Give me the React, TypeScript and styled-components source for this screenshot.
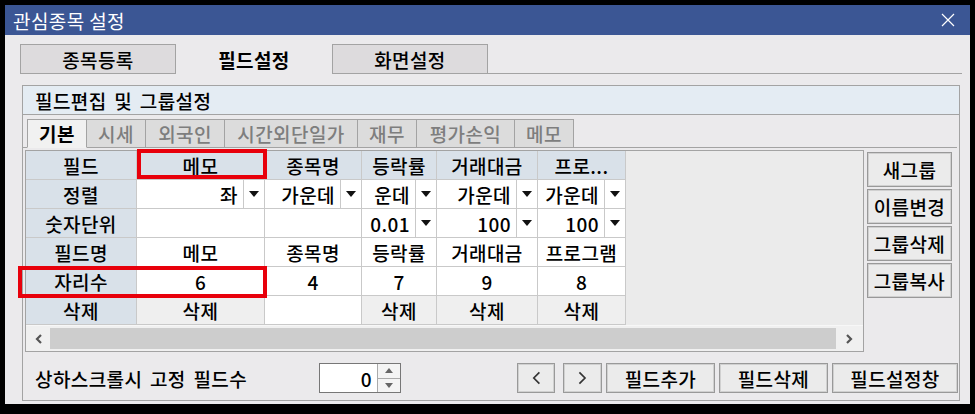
import React from 'react';
import styled, { createGlobalStyle, css } from 'styled-components';

const GlobalStyle = createGlobalStyle`
    html, body {
        margin: 0;
        padding: 0;
        background: #000;
    }
    body {
        font-family: "Noto Sans CJK KR", "Noto Sans", sans-serif;
        font-size: 19px;
        font-weight: 500;
        letter-spacing: 0.4px;
        color: #000;
    }
    * {
        box-sizing: border-box;
    }
`;

const LINE = '#a3a3a3';
const CELL_LINE = '#c9c9c9';
const HEAD_BG = '#d9e1e9';

const Screen = styled.div`
    width: 975px;
    height: 414px;
    padding: 5px 5px 10px 5px;
    background: #000;
`;

const Dialog = styled.div`
    width: 100%;
    height: 100%;
    display: flex;
    flex-direction: column;
    background: #ebeaec;
`;

const TitleBar = styled.div`
    height: 30px;
    flex: 0 0 30px;
    display: flex;
    align-items: center;
    justify-content: space-between;
    padding: 0 15px 0 8px;
    background: #3b5694;
    color: #fff;
    font-weight: 400;
`;

const Body = styled.div`
    flex: 1;
    display: flex;
    flex-direction: column;
    padding: 9px 8px 4px 15px;
`;

const MainTabs = styled.div`
    display: flex;
    height: 30px;
`;

const MainTab = styled.div<{ $active?: boolean }>`
    width: 156px;
    display: flex;
    align-items: center;
    justify-content: center;
    ${({ $active }) => $active
        ? css`
            font-weight: 700;
            background: #ebeaec;
        `
        : css`
            background: #dddbdd;
            border: 1px solid ${LINE};
        `}
`;

const TabFiller = styled.div`
    flex: 1;
    border-bottom: 1px solid ${LINE};
`;

const GroupBox = styled.section`
    margin: 11px 2px 0 2px;
    height: 316px;
    display: flex;
    flex-direction: column;
    border: 1px solid ${LINE};
`;

const GroupHeader = styled.div`
    height: 29px;
    display: flex;
    align-items: center;
    padding-left: 12px;
    word-spacing: 3px;
    background: #e4ecf3;
    border-bottom: 1px solid ${LINE};
`;

const SubTabs = styled.div`
    display: flex;
    height: 31px;
    margin: 2px 2px 0 0;
    padding: 2px 0 0 4px;
    border-bottom: 1px solid ${LINE};
`;

const SubTab = styled.div<{ $w: number; $active?: boolean }>`
    width: ${({ $w }) => $w}px;
    height: 29px;
    display: flex;
    align-items: center;
    justify-content: center;
    border: 1px solid ${LINE};
    border-left: none;
    ${({ $active }) => $active
        ? css`
            border-left: 1px solid ${LINE};
            border-bottom: 1px solid #f1f1f1;
            background: #f1f1f1;
            font-weight: 700;
        `
        : css`
            background: #dcdcdc;
            color: #7e7e7e;
        `}
`;

const ContentRow = styled.div`
    display: flex;
    gap: 3px;
    margin: 2px 7px 0 2px;
`;

const GridFrame = styled.div`
    position: relative;
    width: 839px;
    height: 202px;
    display: flex;
    flex-direction: column;
    border: 1px solid ${LINE};
    background: #ebebeb;
`;

const Table = styled.div`
    display: grid;
    grid-template-columns: 111px 128px 97px 75px 101px 88px;
    grid-auto-rows: 29px;
    width: 600px;
    flex: 1;
`;

type CellTone = 'head' | 'plain' | 'button';

const toneBg: Record<CellTone, string> = {
    head: HEAD_BG,
    plain: '#fff',
    button: '#efefef',
};

const Cell = styled.div<{ $tone: CellTone }>`
    display: flex;
    align-items: center;
    justify-content: center;
    overflow: hidden;
    white-space: nowrap;
    border-right: 1px solid ${CELL_LINE};
    border-bottom: 1px solid ${CELL_LINE};
    background: ${({ $tone }) => toneBg[$tone]};
`;

const SelectCell = styled.div`
    display: flex;
    overflow: hidden;
    white-space: nowrap;
    border-right: 1px solid ${CELL_LINE};
    border-bottom: 1px solid ${CELL_LINE};
    background: #fff;
`;

const SelectValue = styled.span`
    flex: 1;
    display: flex;
    align-items: center;
    justify-content: flex-end;
    padding-right: 5px;
    overflow: hidden;
`;

const SelectArrow = styled.span`
    width: 21px;
    display: flex;
    align-items: center;
    justify-content: center;
    border-left: 1px solid ${CELL_LINE};

    &::after {
        content: '';
        border-left: 5px solid transparent;
        border-right: 5px solid transparent;
        border-top: 6px solid #111;
    }
`;

const ScrollBar = styled.div`
    height: 26px;
    display: flex;
    align-items: stretch;
    background: #f0f0f0;
    border-top: 1px solid #f7f7f7;
`;

const ScrollButton = styled.div<{ $w: number }>`
    width: ${({ $w }) => $w}px;
    display: flex;
    align-items: center;
    justify-content: center;
`;

const ScrollThumb = styled.div`
    flex: 1;
    margin: 2px 0;
    background: #cdcdcd;
`;

const Marker = styled.div<{ $x: number; $y: number; $w: number; $h: number }>`
    position: absolute;
    left: ${({ $x }) => $x}px;
    top: ${({ $y }) => $y}px;
    width: ${({ $w }) => $w}px;
    height: ${({ $h }) => $h}px;
    border: 4px solid #e8000b;
    pointer-events: none;
`;

const SideButtons = styled.div`
    display: flex;
    flex-direction: column;
    gap: 2px;
    margin-top: 2px;
`;

const PlainButton = styled.button<{ $w: number; $h?: number; $gapLeft?: number }>`
    width: ${({ $w }) => $w}px;
    height: ${({ $h }) => $h ?? 30}px;
    margin-left: ${({ $gapLeft }) => $gapLeft ?? 0}px;
    display: flex;
    align-items: center;
    justify-content: center;
    padding: 0;
    font: inherit;
    letter-spacing: inherit;
    white-space: nowrap;
    color: #000;
    background: #ebebeb;
    border: 1px solid #999;
    box-shadow: inset 0 0 0 1px #d0d0d0;
`;

const BottomRow = styled.div`
    display: flex;
    align-items: center;
    height: 30px;
    margin: auto 1px 7px 12px;
`;

const FixedLabel = styled.span`
    width: 284px;
    word-spacing: 3px;
`;

const Spin = styled.div`
    display: flex;
    width: 82px;
    height: 30px;
    border: 1px solid #777;
    background: #fff;
`;

const SpinValue = styled.span`
    flex: 1;
    display: flex;
    align-items: center;
    justify-content: flex-end;
    padding-right: 5px;
`;

const SpinArrows = styled.div`
    width: 23px;
    display: flex;
    flex-direction: column;
    border-left: 1px solid #aaa;
`;

const SpinStep = styled.span<{ $up?: boolean }>`
    flex: 1;
    display: flex;
    align-items: center;
    justify-content: center;
    background: #f4f4f4;
    & + & {
        border-top: 1px solid #aaa;
    }

    &::after {
        content: '';
        border-left: 4px solid transparent;
        border-right: 4px solid transparent;
        ${({ $up }) => $up
            ? css`border-bottom: 5px solid #666;`
            : css`border-top: 5px solid #666;`}
    }
`;

const Spacer = styled.div`
    flex: 1;
`;

const ActionButtons = styled.div`
    display: flex;
    gap: 4px;
`;

const Chevron = ({ dir, color = '#555', w = 2.2, size = 10 }: { dir: 'left' | 'right'; color?: string; w?: number; size?: number }) => (
    <svg width={size * 0.7} height={size} viewBox="0 0 7 10">
        <polyline
            points={dir === 'left' ? '6,1 2,5 6,9' : '1,1 5,5 1,9'}
            fill="none"
            stroke={color}
            strokeWidth={w}
        />
    </svg>
);

const CloseIcon = () => (
    <svg width="14" height="14" viewBox="0 0 14 14">
        <path d="M1 1 L13 13 M13 1 L1 13" stroke="#fff" strokeWidth="1.2" />
    </svg>
);

type GridCell =
    | { kind: 'head'; text: string }
    | { kind: 'text'; text: string }
    | { kind: 'select'; text: string }
    | { kind: 'button'; text: string }
    | { kind: 'empty' };

const head = (text: string): GridCell => ({ kind: 'head', text });
const text = (t: string): GridCell => ({ kind: 'text', text: t });
const select = (t: string): GridCell => ({ kind: 'select', text: t });
const del: GridCell = { kind: 'button', text: '삭제' };
const empty: GridCell = { kind: 'empty' };

const rows: GridCell[][] = [
    [head('필드'), head('메모'), head('종목명'), head('등락률'), head('거래대금'), head('프로...')],
    [head('정렬'), select('좌'), select('가운데'), select('운데'), select('가운데'), select('가운데')],
    [head('숫자단위'), empty, empty, select('0.01'), select('100'), select('100')],
    [head('필드명'), text('메모'), text('종목명'), text('등락률'), text('거래대금'), text('프로그램')],
    [head('자리수'), text('6'), text('4'), text('7'), text('9'), text('8')],
    [head('삭제'), del, empty, del, del, del],
];

const subTabs = [
    { label: '기본', w: 60 },
    { label: '시세', w: 59 },
    { label: '외국인', w: 79 },
    { label: '시간외단일가', w: 133 },
    { label: '재무', w: 59 },
    { label: '평가손익', w: 98 },
    { label: '메모', w: 59 },
];

const renderCell = (cell: GridCell, key: string) => {
    switch (cell.kind) {
        case 'head':
            return <Cell key={key} $tone="head">{cell.text}</Cell>;
        case 'button':
            return <Cell key={key} $tone="button">{cell.text}</Cell>;
        case 'select':
            return (
                <SelectCell key={key}>
                    <SelectValue>{cell.text}</SelectValue>
                    <SelectArrow />
                </SelectCell>
            );
        case 'text':
            return <Cell key={key} $tone="plain">{cell.text}</Cell>;
        default:
            return <Cell key={key} $tone="plain" />;
    }
};

export default function App(): JSX.Element {
    return (
        <Screen>
            <GlobalStyle />
            <Dialog>
                <TitleBar>
                    <span>관심종목 설정</span>
                    <CloseIcon />
                </TitleBar>
                <Body>
                    <MainTabs>
                        <MainTab>종목등록</MainTab>
                        <MainTab $active>필드설정</MainTab>
                        <MainTab>화면설정</MainTab>
                        <TabFiller />
                    </MainTabs>

                    <GroupBox>
                        <GroupHeader>필드편집 및 그룹설정</GroupHeader>
                        <SubTabs>
                            {subTabs.map((t, i) => (
                                <SubTab key={t.label} $w={t.w} $active={i === 0}>{t.label}</SubTab>
                            ))}
                        </SubTabs>

                        <ContentRow>
                            <GridFrame>
                                <Table>
                                    {rows.map((row, r) => row.map((cell, c) => renderCell(cell, `${r}-${c}`)))}
                                </Table>
                                <ScrollBar>
                                    <ScrollButton $w={24}><Chevron dir="left" /></ScrollButton>
                                    <ScrollThumb />
                                    <ScrollButton $w={27}><Chevron dir="right" /></ScrollButton>
                                </ScrollBar>
                                <Marker $x={111} $y={-2} $w={130} $h={30} />
                                <Marker $x={-8} $y={115} $w={249} $h={32} />
                            </GridFrame>

                            <SideButtons>
                                <PlainButton $w={85} $h={35}>새그룹</PlainButton>
                                <PlainButton $w={85} $h={35}>이름변경</PlainButton>
                                <PlainButton $w={85} $h={35}>그룹삭제</PlainButton>
                                <PlainButton $w={85} $h={35}>그룹복사</PlainButton>
                            </SideButtons>
                        </ContentRow>

                        <BottomRow>
                            <FixedLabel>상하스크롤시 고정 필드수</FixedLabel>
                            <Spin>
                                <SpinValue>0</SpinValue>
                                <SpinArrows>
                                    <SpinStep $up />
                                    <SpinStep />
                                </SpinArrows>
                            </Spin>
                            <Spacer />
                            <ActionButtons>
                                <PlainButton $w={38}><Chevron dir="left" color="#333" w={1.2} size={14} /></PlainButton>
                                <PlainButton $w={39} $gapLeft={4}><Chevron dir="right" color="#333" w={1.2} size={14} /></PlainButton>
                                <PlainButton $w={109}>필드추가</PlainButton>
                                <PlainButton $w={109}>필드삭제</PlainButton>
                                <PlainButton $w={126}>필드설정창</PlainButton>
                            </ActionButtons>
                        </BottomRow>
                    </GroupBox>
                </Body>
            </Dialog>
        </Screen>
    );
}
